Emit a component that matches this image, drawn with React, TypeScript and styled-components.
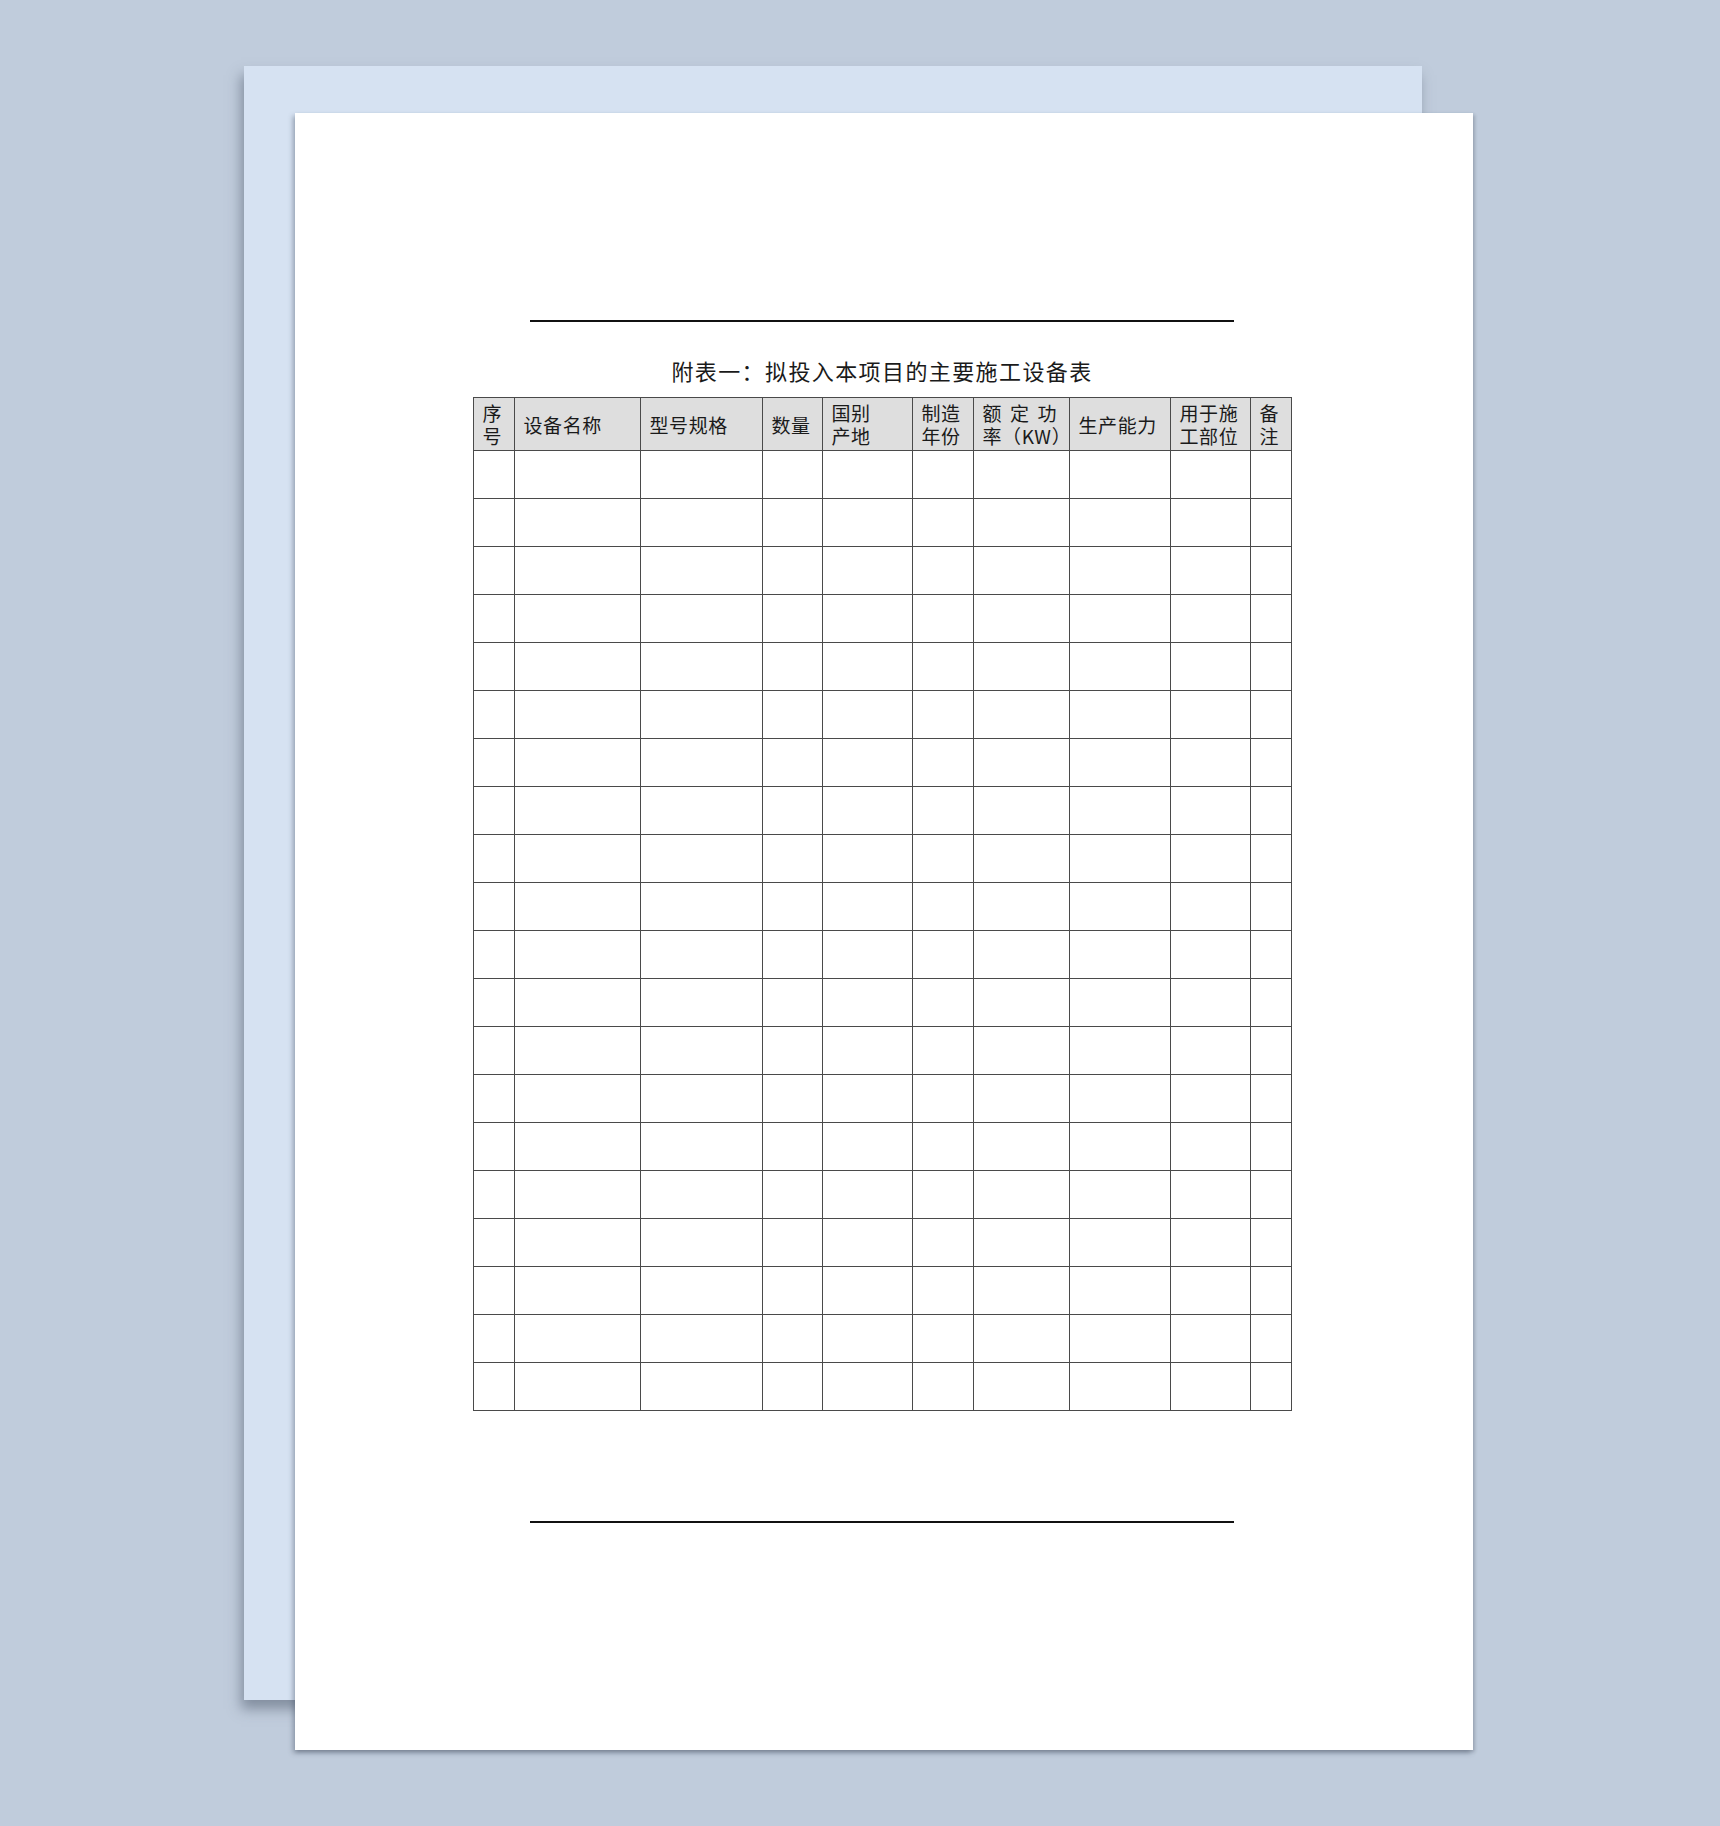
import styled, { createGlobalStyle } from "styled-components";

const GlobalStyle = createGlobalStyle`
  html, body {
    margin: 0;
    padding: 0;
    background: #c0ccdc;
  }
  body {
    font-family: "Noto Sans CJK SC", "Noto Sans", sans-serif;
  }
`;

const columns = [41, 126, 122, 60, 90, 61, 96, 101, 80, 41];

const headers: string[][] = [
  ["序", "号"],
  ["设备名称"],
  ["型号规格"],
  ["数量"],
  ["国别", "产地"],
  ["制造", "年份"],
  ["额 定 功", "率（KW）"],
  ["生产能力"],
  ["用于施", "工部位"],
  ["备", "注"],
];

const ROWS = 20;

const App = () => {
  return (
    <>
      <GlobalStyle />
      <Scene>
        <BackSheet />
        <FrontSheet>
          <Rule />
          <Content>
            <Title>附表一：拟投入本项目的主要施工设备表</Title>
            <Table>
              <colgroup>
                {columns.map((w, i) => (
                  <col key={i} style={{ width: w }} />
                ))}
              </colgroup>
              <thead>
                <tr>
                  {headers.map((lines, i) => (
                    <HeadCell key={i}>
                      {lines.map((l, j) => (
                        <HeadLine key={j}>{l}</HeadLine>
                      ))}
                    </HeadCell>
                  ))}
                </tr>
              </thead>
              <tbody>
                {Array.from({ length: ROWS }).map((_, r) => (
                  <BodyRow key={r}>
                    {columns.map((_, c) => (
                      <BodyCell key={c} />
                    ))}
                  </BodyRow>
                ))}
              </tbody>
            </Table>
          </Content>
          <Rule $bottom />
        </FrontSheet>
      </Scene>
    </>
  );
};

export default App;

const Scene = styled.div`
  width: 1720px;
  height: 1826px;
  box-sizing: border-box;
  padding: 66px 0 0 244px;
  display: grid;
  grid-template-columns: max-content;
  grid-template-rows: max-content;
  overflow: hidden;
`;

const BackSheet = styled.div`
  grid-area: 1 / 1;
  width: 1178px;
  height: 1634px;
  background: #d6e2f2;
  box-shadow: -3px 9px 12px rgba(70, 82, 100, 0.5);
`;

const FrontSheet = styled.div`
  grid-area: 1 / 1;
  margin: 47px 0 0 51px;
  width: 1178px;
  height: 1637px;
  background: #ffffff;
  box-shadow: -2px 3px 5px rgba(70, 82, 100, 0.45), 2px 2px 3px rgba(70, 82, 100, 0.25);
  box-sizing: border-box;
  padding-top: 207px;
  display: flex;
  flex-direction: column;
`;

const Rule = styled.div<{ $bottom?: boolean }>`
  width: 704px;
  height: 2px;
  margin-left: 235px;
  margin-top: ${(p) => (p.$bottom ? "110px" : "0")};
  background: #111111;
`;

const Content = styled.div`
  width: 818px;
  margin-left: 178px;
  display: flex;
  flex-direction: column;
  align-items: center;
`;

const Title = styled.h1`
  margin: 33px 0 12px;
  font-size: 22px;
  line-height: 30px;
  font-weight: 400;
  letter-spacing: 1.4px;
  color: #1a1a1a;
  white-space: nowrap;
`;

const Table = styled.table`
  width: 818px;
  table-layout: fixed;
  border-collapse: collapse;
  border: 1.5px solid #4a4a4a;
`;

const HeadCell = styled.th`
  height: 53px;
  padding: 0 0 0 9px;
  box-sizing: border-box;
  background: #dedede;
  border: 1.5px solid #4a4a4a;
  text-align: left;
  vertical-align: middle;
  font-weight: 400;
  font-size: 19px;
  line-height: 23px;
  letter-spacing: 0.6px;
  word-spacing: 3px;
  color: #1a1a1a;
  white-space: pre;
`;

const HeadLine = styled.span`
  display: block;
`;

const BodyRow = styled.tr`
  height: 48px;
`;

const BodyCell = styled.td`
  padding: 0;
  border: 1.5px solid #4a4a4a;
`;
